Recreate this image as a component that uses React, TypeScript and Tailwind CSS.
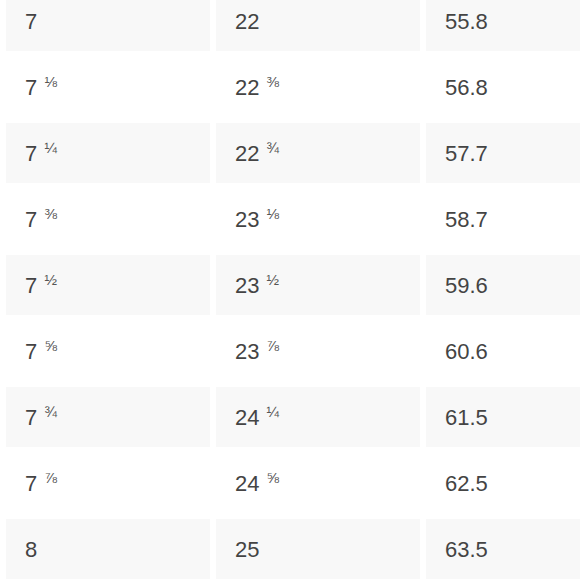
import React from "react";

const rows: [string, string, string, string, string][] = [
  ["7", "", "22", "", "55.8"],
  ["7", "⅛", "22", "⅜", "56.8"],
  ["7", "¼", "22", "¾", "57.7"],
  ["7", "⅜", "23", "⅛", "58.7"],
  ["7", "½", "23", "½", "59.6"],
  ["7", "⅝", "23", "⅞", "60.6"],
  ["7", "¾", "24", "¼", "61.5"],
  ["7", "⅞", "24", "⅝", "62.5"],
  ["8", "", "25", "", "63.5"],
];

function Val({ n, f }: { n: string; f: string }) {
  return (
    <span>
      {n}
      {f && (
        <>
          {" "}
          <sup className="text-[15px] relative -top-[8px] ml-[1px] text-[#555]">{f}</sup>
        </>
      )}
    </span>
  );
}

export default function App() {
  return (
    <div
      className="w-[580px] h-[580px] overflow-hidden bg-white"
      style={{ fontFamily: '"Liberation Sans", Arial, sans-serif' }}
    >
      <div className="-mt-[15px] p-[6px] grid grid-cols-[204px_204px_204px] gap-[6px] w-[636px] text-[22px] text-[#444]">
        {rows.map((r, i) => {
          const bg = i % 2 === 0 ? "bg-[#f8f8f8]" : "bg-white";
          return (
            <React.Fragment key={i}>
              <div className={`${bg} h-[60px] flex items-center pl-[19px]`}>
                <Val n={r[0]} f={r[1]} />
              </div>
              <div className={`${bg} h-[60px] flex items-center pl-[19px]`}>
                <Val n={r[2]} f={r[3]} />
              </div>
              <div className={`${bg} h-[60px] flex items-center pl-[19px]`}>
                <Val n={r[4]} f="" />
              </div>
            </React.Fragment>
          );
        })}
      </div>
    </div>
  );
}
